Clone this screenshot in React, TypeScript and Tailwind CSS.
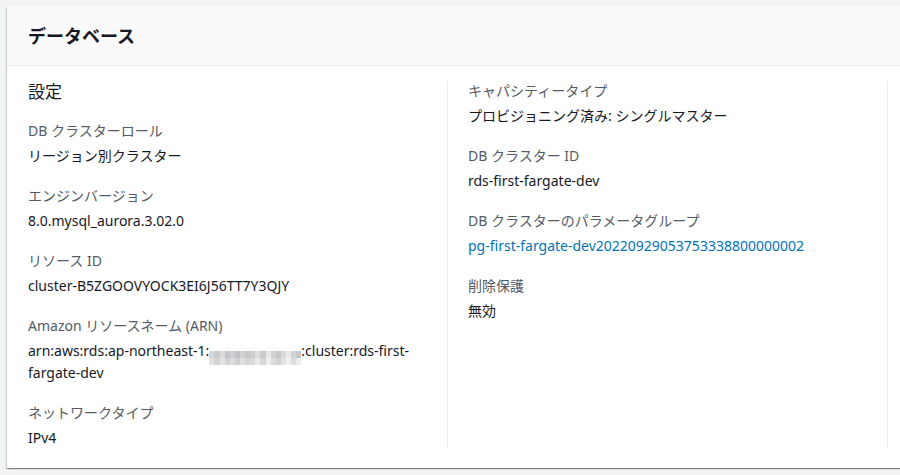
import React from 'react';

type Field = {
  label: string;
  value: React.ReactNode;
};

// ぼかし済みのアカウント ID（モザイク）
const mosaicTop = [
  'bg-[#d5d6d8]', 'bg-[#c9cacc]', 'bg-[#d9dadc]', 'bg-[#c4c5c8]', 'bg-[#cfd0d2]', 'bg-[#c2c3c6]',
  'bg-[#d2d3d5]', 'bg-[#c6c7ca]', 'bg-[#cdced0]', 'bg-[#dedfe1]', 'bg-[#c8c9cc]', 'bg-[#e6e7e8]',
  'bg-[#d0d1d3]', 'bg-[#c5c6c9]', 'bg-[#d8d9db]', 'bg-[#e9eaeb]', 'bg-[#d3d4d6]', 'bg-[#c7c8cb]',
];
const mosaicBottom = [
  'bg-[#e0e1e2]', 'bg-[#d3d4d6]', 'bg-[#e2e3e4]', 'bg-[#d1d2d4]', 'bg-[#dcdddf]', 'bg-[#cfd0d2]',
  'bg-[#dfe0e1]', 'bg-[#d4d5d7]', 'bg-[#d9dadc]', 'bg-[#e8e9ea]', 'bg-[#d6d7d9]', 'bg-[#eeeff0]',
  'bg-[#dbdcde]', 'bg-[#d2d3d5]', 'bg-[#e1e2e3]', 'bg-[#f0f0f1]', 'bg-[#dddee0]', 'bg-[#ebeced]',
];

const Mosaic = () => (
  <span className="relative top-[2px] inline-flex flex-col w-[92px] h-[14px] align-baseline overflow-hidden">
    <span className="flex h-[7px]">
      {mosaicTop.map((c, i) => <span key={i} className={`flex-1 ${c}`} />)}
    </span>
    <span className="flex h-[7px]">
      {mosaicBottom.map((c, i) => <span key={i} className={`flex-1 ${c}`} />)}
    </span>
  </span>
);

const leftFields: Field[] = [
  { label: 'DB クラスターロール', value: 'リージョン別クラスター' },
  { label: 'エンジンバージョン', value: '8.0.mysql_aurora.3.02.0' },
  { label: 'リソース ID', value: 'cluster-B5ZGOOVYOCK3EI6J56TT7Y3QJY' },
  {
    label: 'Amazon リソースネーム (ARN)',
    value: <>arn:aws:rds:ap-northeast-1:<Mosaic />:cluster:rds-first-fargate-dev</>,
  },
  { label: 'ネットワークタイプ', value: 'IPv4' },
];

const rightFields: Field[] = [
  { label: 'キャパシティータイプ', value: 'プロビジョニング済み: シングルマスター' },
  { label: 'DB クラスター ID', value: 'rds-first-fargate-dev' },
  {
    label: 'DB クラスターのパラメータグループ',
    value: <a href="#" className="text-[#0073bb] hover:underline">pg-first-fargate-dev20220929053753338800000002</a>,
  },
  { label: '削除保護', value: '無効' },
];

const FieldItem = ({ field }: { field: Field }) => (
  <div>
    <div className="text-[14px] leading-[20px] text-[#545b64] mb-[5px]">{field.label}</div>
    <div className="text-[14px] leading-[20px] text-[#16191f] break-words">{field.value}</div>
  </div>
);

const App = () => {
  return (
    <div
      className="min-h-[475px] bg-[#f2f3f3] pt-[7px] pl-[7px]"
      style={{ fontFamily: '"Noto Sans", "Noto Sans CJK JP", sans-serif' }}
    >
      <div className="w-[1000px] bg-white shadow-[0_1px_1px_0_rgba(0,28,36,0.3),1px_1px_1px_0_rgba(0,28,36,0.15),-1px_1px_1px_0_rgba(0,28,36,0.15)]">
        <div className="h-[59px] bg-[#fafafa] border-b border-[#eaeded] px-[21px] flex items-center">
          <h2 className="text-[18px] leading-[22px] font-bold text-[#16191f]">データベース</h2>
        </div>
        <div className="flex pt-[15px] pb-[20px]">
          <div className="w-[441px] pl-[21px] pr-[20px] border-r border-[#eaeded] flex flex-col gap-[20px]">
            <div className="-mb-[2px]">
              <h3 className="text-[17px] leading-[22px] text-[#16191f]">設定</h3>
            </div>
            {leftFields.map(f => <FieldItem key={f.label} field={f} />)}
          </div>
          <div className="w-[440px] pl-[20px] pr-[20px] border-r border-[#eaeded] flex flex-col gap-[20px]">
            {rightFields.map(f => <FieldItem key={f.label} field={f} />)}
          </div>
        </div>
      </div>
    </div>
  );
};

export default App;
